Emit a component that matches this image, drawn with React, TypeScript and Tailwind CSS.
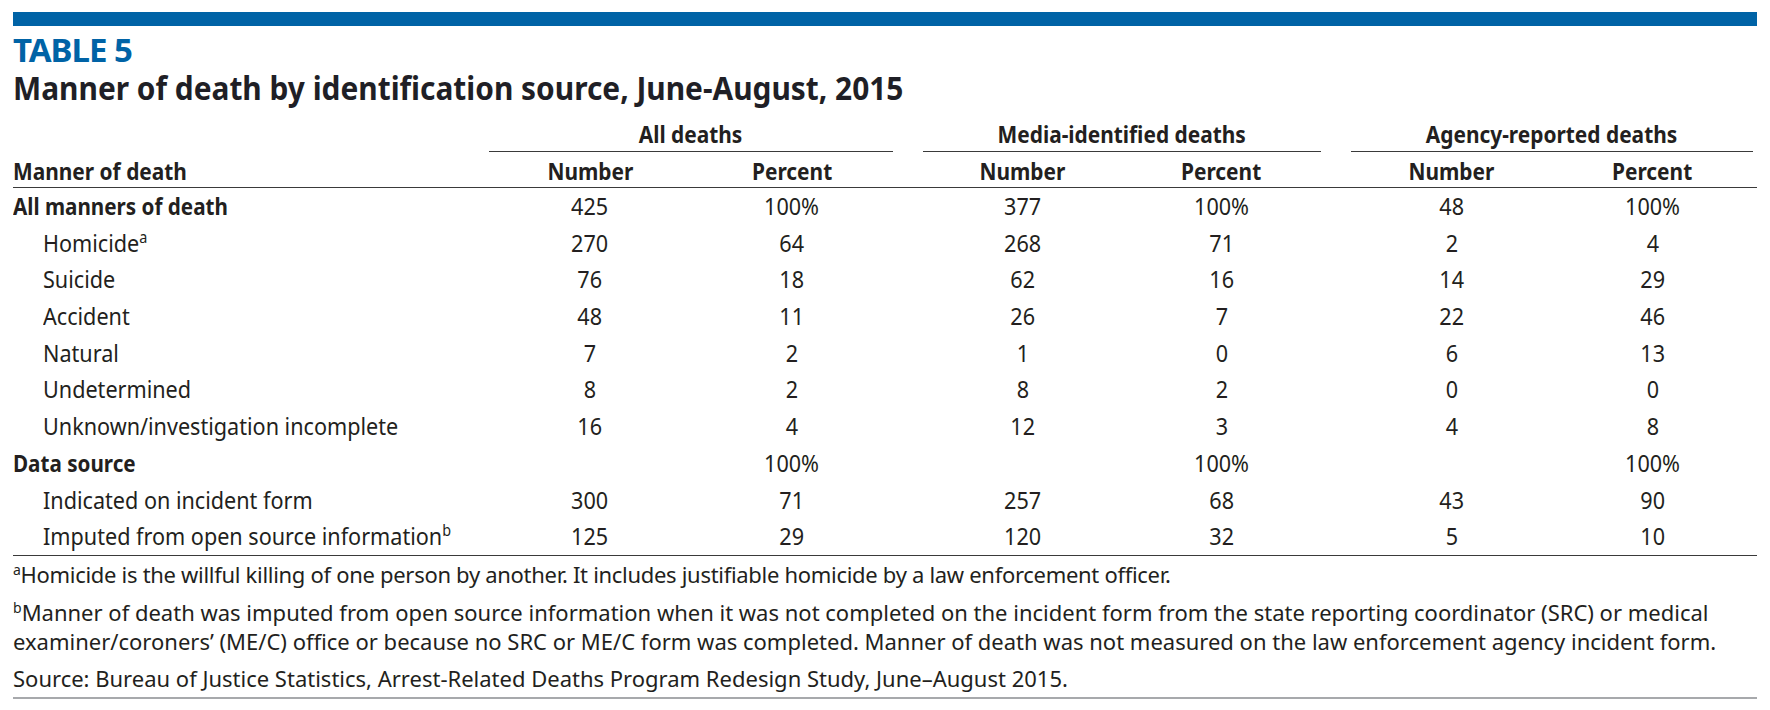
import React from "react";

type Row = { label: string; sup?: string; bold?: boolean; indent?: boolean; v: string[] };

const rows: Row[] = [
  { label: "All manners of death", bold: true, v: ["425", "100%", "377", "100%", "48", "100%"] },
  { label: "Homicide", sup: "a", indent: true, v: ["270", "64", "268", "71", "2", "4"] },
  { label: "Suicide", indent: true, v: ["76", "18", "62", "16", "14", "29"] },
  { label: "Accident", indent: true, v: ["48", "11", "26", "7", "22", "46"] },
  { label: "Natural", indent: true, v: ["7", "2", "1", "0", "6", "13"] },
  { label: "Undetermined", indent: true, v: ["8", "2", "8", "2", "0", "0"] },
  { label: "Unknown/investigation incomplete", indent: true, v: ["16", "4", "12", "3", "4", "8"] },
  { label: "Data source", bold: true, v: ["", "100%", "", "100%", "", "100%"] },
  { label: "Indicated on incident form", indent: true, v: ["300", "71", "257", "68", "43", "90"] },
  { label: "Imputed from open source information", sup: "b", indent: true, v: ["125", "29", "120", "32", "5", "10"] },
];

const groupW = ["w-[404px]", "w-[398px]", "w-[402px]"];

export default function App() {
  return (
    <div className="w-[1770px] h-[710px] bg-white pt-[12px] px-[13px] font-['Noto_Sans','Open_Sans',sans-serif] text-[#231f20]">
      <div className="h-[14px] bg-[#0063a6]" />
      <div className="mt-[4.5px] h-[38px] leading-[38px] text-[33px] font-bold text-[#0063a6] tracking-[-1px]">TABLE 5</div>
      <div className="h-[38px] leading-[38px] text-[33px] font-bold whitespace-nowrap text-[#1f1f26]">
        <span className="inline-block origin-left scale-x-[0.905]">Manner of death by identification source, June-August, 2015</span>
      </div>

      {/* group header */}
      <div className="mt-[12px] flex text-[24px] font-bold">
        <div className="w-[476px]" />
        <div className="flex gap-[30px]">
          {["All deaths", "Media-identified deaths", "Agency-reported deaths"].map((g, i) => (
            <div key={g} className={`${groupW[i]} leading-[30px] pb-[2px] border-b border-[#3a3a3a] text-center whitespace-nowrap`}>
              <span className="inline-block scale-x-[0.87]">{g}</span>
            </div>
          ))}
        </div>
      </div>

      {/* sub header */}
      <div className="flex text-[24px] font-bold border-b border-[#3a3a3a] pt-[4px] pb-[1.5px] leading-[30px]">
        <div className="w-[476px]">
          <span className="inline-block origin-left scale-x-[0.87]">Manner of death</span>
        </div>
        <div className="flex gap-[30px]">
          {groupW.map((w) => (
            <div key={w} className={`${w} flex`}>
              <div className="flex-1 text-center">
                <span className="inline-block scale-x-[0.87]">Number</span>
              </div>
              <div className="flex-1 text-center">
                <span className="inline-block scale-x-[0.87]">Percent</span>
              </div>
            </div>
          ))}
        </div>
      </div>

      {/* body */}
      <div className="border-b border-[#3a3a3a] text-[24px]">
        {rows.map((r) => (
          <div key={r.label} className="flex h-[36.7px] leading-[36.7px]">
            <div className={`w-[476px] whitespace-nowrap ${r.indent ? "pl-[30px]" : ""}`}>
              <span className={`inline-block origin-left ${r.bold ? "font-bold scale-x-[0.86]" : "scale-x-[0.9]"}`}>
                {r.label}
                {r.sup && <sup className="text-[16px] top-[-9px]">{r.sup}</sup>}
              </span>
            </div>
            <div className="flex gap-[30px]">
              {groupW.map((w, gi) => (
                <div key={w} className={`${w} flex`}>
                  <div className="flex-1 text-center">
                    <span className="inline-block scale-x-[0.9]">{r.v[gi * 2]}</span>
                  </div>
                  <div className="flex-1 text-center">
                    <span className="inline-block scale-x-[0.9]">{r.v[gi * 2 + 1]}</span>
                  </div>
                </div>
              ))}
            </div>
          </div>
        ))}
      </div>

      {/* footnotes */}
      <div className="mt-[4.3px] text-[22px] leading-[29.4px] whitespace-nowrap">
        <p className="tracking-[-0.3px]">
          <sup className="text-[14px] top-[-8px]">a</sup>Homicide is the willful killing of one person by another. It includes justifiable homicide by a law enforcement officer.
        </p>
        <p className="mt-[8px]">
          <sup className="text-[14px] top-[-8px]">b</sup>Manner of death was imputed from open source information when it was not completed on the incident form from the state reporting coordinator (SRC) or medical
          <br />
          examiner/coroners’ (ME/C) office or because no SRC or ME/C form was completed. Manner of death was not measured on the law enforcement agency incident form.
        </p>
        <p className="mt-[8px]">Source: Bureau of Justice Statistics, Arrest-Related Deaths Program Redesign Study, June–August 2015.</p>
      </div>
      <div className="mt-[3px] h-[2px] bg-[#a7a9ac]" />
    </div>
  );
}
